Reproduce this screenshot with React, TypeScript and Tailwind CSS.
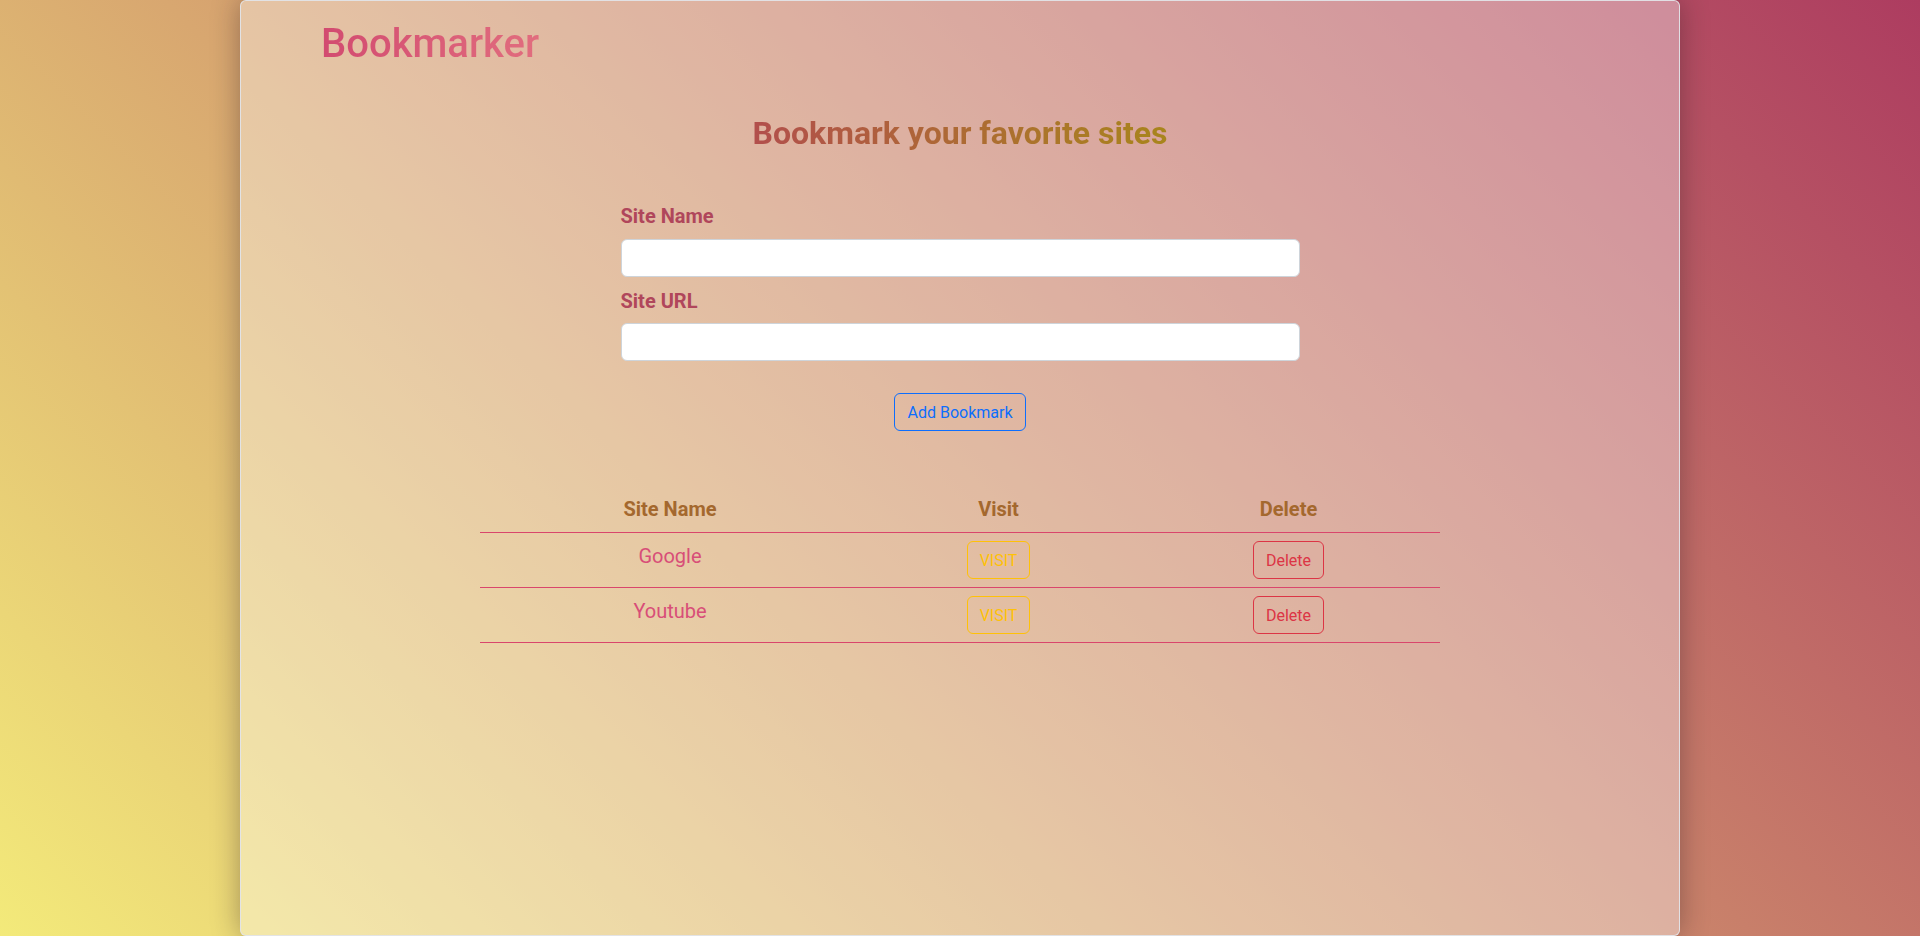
import React from "react";

const rows = [
  { name: "Google" },
  { name: "Youtube" },
];

export default function App() {
  return (
    <div className="min-h-screen w-full overflow-hidden bg-[linear-gradient(45deg,#f3ea7a,#ad3c60)] font-['Roboto','Liberation_Sans',sans-serif]">
      <div className="mx-auto h-[936px] w-3/4 rounded-md border border-[rgba(225,228,232,0.95)] bg-white/[0.37] shadow-[0_0_28px_rgba(40,20,30,0.38)]">
        <h1 className="pl-[80px] pt-[19px] text-[40px] leading-[48px] font-medium">
          <span className="inline-block bg-[linear-gradient(to_right,#d24b70,#e16d7e)] bg-clip-text text-transparent">
            Bookmarker
          </span>
        </h1>

        <h2 className="mt-[46px] text-center text-[32px] leading-[38px] font-bold">
          <span className="inline-block bg-[linear-gradient(to_right,#b24f4c,#a8851c)] bg-clip-text text-transparent">
            Bookmark your favorite sites
          </span>
        </h2>

        <div className="mx-auto mt-[52px] w-[679px]">
          <label className="block text-[20px] leading-[24px] font-bold text-[#b0465b]">
            Site Name
          </label>
          <input
            type="text"
            className="mt-[11px] block h-[38px] w-full rounded-md border border-[#ced4da] bg-white px-3 text-base outline-none"
          />
          <label className="mt-[12px] block text-[20px] leading-[24px] font-bold text-[#b0465b]">
            Site URL
          </label>
          <input
            type="text"
            className="mt-[10px] block h-[38px] w-full rounded-md border border-[#ced4da] bg-white px-3 text-base outline-none"
          />
          <div className="mt-[32px] flex justify-center">
            <button className="h-[38px] rounded-md border border-[#0d6efd] px-3 pt-[1px] text-base leading-6 text-[#0d6efd]">
              Add Bookmark
            </button>
          </div>
        </div>

        <table className="mx-auto mt-[55px] w-[960px] table-fixed border-collapse">
          <thead>
            <tr>
              <th className="w-[380px] border-b border-[#d9466c] py-2 text-center text-[20px] leading-[30px] font-bold text-[#a4682e]">
                Site Name
              </th>
              <th className="w-[277px] border-b border-[#d9466c] py-2 text-center text-[20px] leading-[30px] font-bold text-[#a4682e]">
                Visit
              </th>
              <th className="w-[303px] border-b border-[#d9466c] py-2 text-center text-[20px] leading-[30px] font-bold text-[#a4682e]">
                Delete
              </th>
            </tr>
          </thead>
          <tbody>
            {rows.map((r) => (
              <tr key={r.name}>
                <td className="border-b border-[#d9466c] py-2 text-center align-top text-[20px] leading-[30px] text-[#d84e78]">
                  {r.name}
                </td>
                <td className="border-b border-[#d9466c] py-2 text-center align-top">
                  <button className="h-[38px] rounded-md border border-[#ffc107] px-3 pt-[1px] text-base leading-6 text-[#ffc107]">
                    VISIT
                  </button>
                </td>
                <td className="border-b border-[#d9466c] py-2 text-center align-top">
                  <button className="h-[38px] rounded-md border border-[#dc3545] px-3 pt-[1px] text-base leading-6 text-[#dc3545]">
                    Delete
                  </button>
                </td>
              </tr>
            ))}
          </tbody>
        </table>
      </div>
    </div>
  );
}
